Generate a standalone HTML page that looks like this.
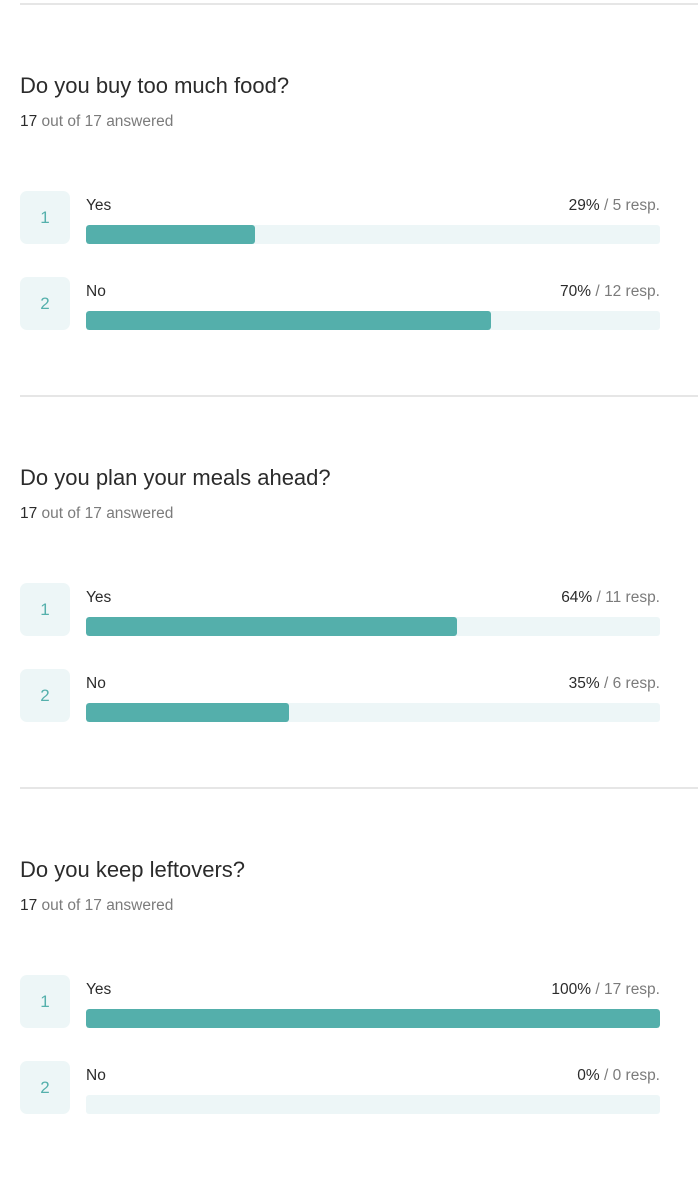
<!DOCTYPE html>
<html><head><style>
body{margin:0;width:698px;height:1172px;background:#fff;font-family:"Liberation Sans",sans-serif;position:relative;overflow:hidden;color:#2b2b2b}
.sec{position:absolute;left:0;width:698px;height:392px}
.line{position:absolute;left:20px;right:0;top:0;height:2px;background:#e6e6e6}
.t{position:absolute;left:20px;top:68px;font-size:22px;line-height:30px;color:#2b2b2b}
.s{position:absolute;left:20px;top:109px;font-size:15.5px;line-height:20px;color:#7b7b7b}
.s b{font-weight:normal;color:#2b2b2b}
.box{position:absolute;left:20px;width:50px;height:53px;border-radius:7px;background:#edf6f7;color:#55b0ac;font-size:17px;line-height:53px;text-align:center}
.lab{position:absolute;left:86px;font-size:15.5px;line-height:20px;color:#2b2b2b}
.pct{position:absolute;right:38px;font-size:15.5px;line-height:20px;color:#7b7b7b}
.pct b{font-weight:normal;color:#2b2b2b}
.bar{position:absolute;left:86px;width:574px;height:19px;border-radius:3px;background:#edf6f7;overflow:hidden}
.bar i{display:block;height:100%;background:#54afab;border-radius:3px}
</style></head><body>

<div class="sec" style="top:3px">
<div class="line"></div>
<div class="t">Do you buy too much food?</div>
<div class="s"><b>17</b> out of 17 answered</div>
<div class="box" style="top:188px">1</div>
<div class="lab" style="top:193px">Yes</div>
<div class="pct" style="top:193px"><b>29%</b> / 5 resp.</div>
<div class="bar" style="top:222px"><i style="width:169px"></i></div>
<div class="box" style="top:274px">2</div>
<div class="lab" style="top:279px">No</div>
<div class="pct" style="top:279px"><b>70%</b> / 12 resp.</div>
<div class="bar" style="top:308px"><i style="width:405px"></i></div>
</div>

<div class="sec" style="top:395px">
<div class="line"></div>
<div class="t">Do you plan your meals ahead?</div>
<div class="s"><b>17</b> out of 17 answered</div>
<div class="box" style="top:188px">1</div>
<div class="lab" style="top:193px">Yes</div>
<div class="pct" style="top:193px"><b>64%</b> / 11 resp.</div>
<div class="bar" style="top:222px"><i style="width:371px"></i></div>
<div class="box" style="top:274px">2</div>
<div class="lab" style="top:279px">No</div>
<div class="pct" style="top:279px"><b>35%</b> / 6 resp.</div>
<div class="bar" style="top:308px"><i style="width:203px"></i></div>
</div>

<div class="sec" style="top:787px">
<div class="line"></div>
<div class="t">Do you keep leftovers?</div>
<div class="s"><b>17</b> out of 17 answered</div>
<div class="box" style="top:188px">1</div>
<div class="lab" style="top:193px">Yes</div>
<div class="pct" style="top:193px"><b>100%</b> / 17 resp.</div>
<div class="bar" style="top:222px"><i style="width:574px"></i></div>
<div class="box" style="top:274px">2</div>
<div class="lab" style="top:279px">No</div>
<div class="pct" style="top:279px"><b>0%</b> / 0 resp.</div>
<div class="bar" style="top:308px"><i style="width:0"></i></div>
</div>

</body></html>
